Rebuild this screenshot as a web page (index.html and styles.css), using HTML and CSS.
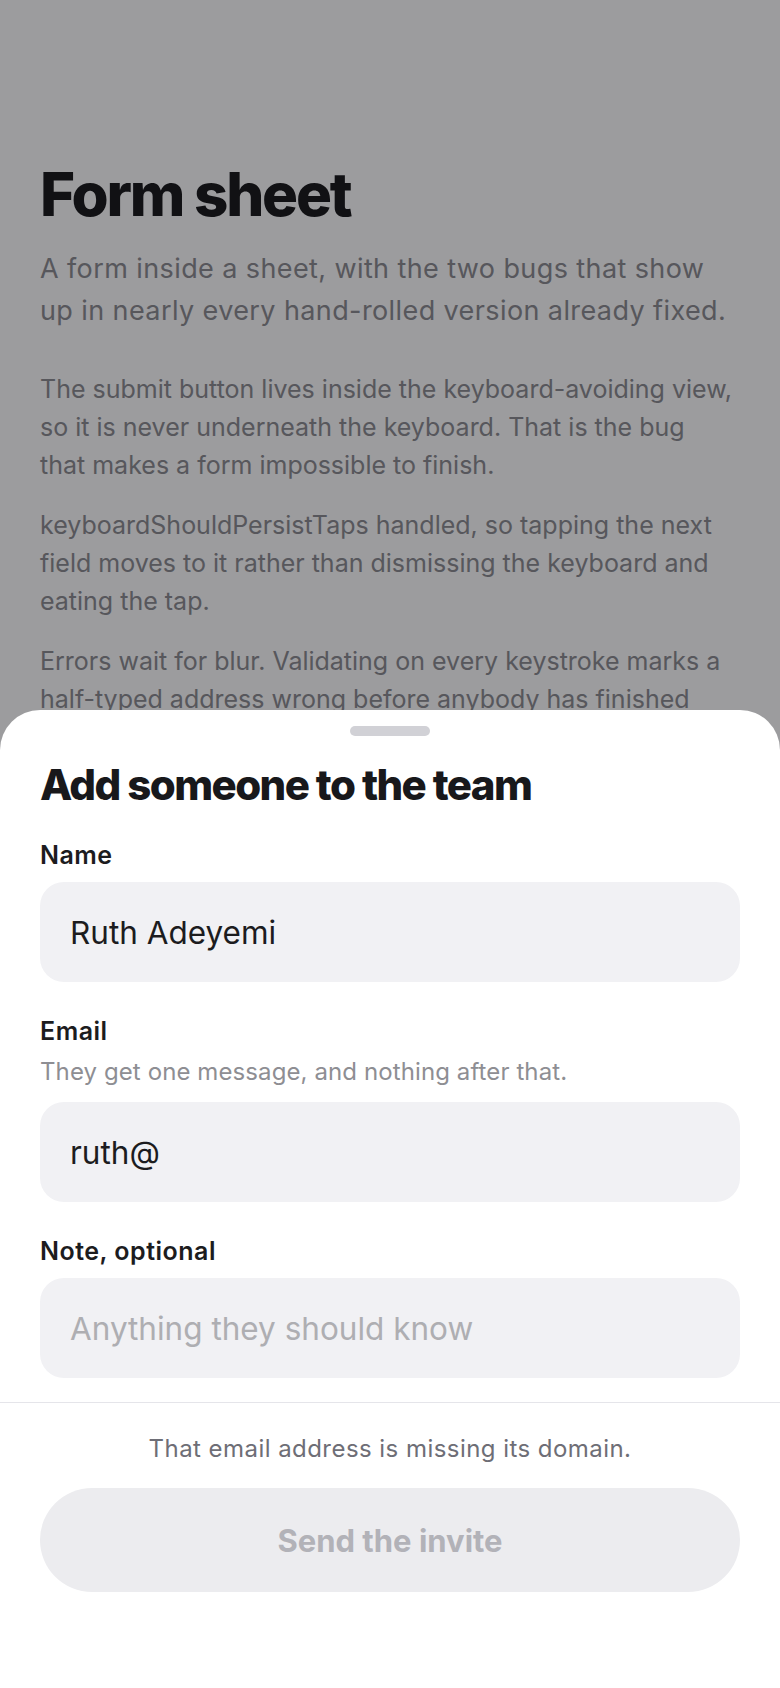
FILE: index.html
```html
<!DOCTYPE html>
<html lang="en">
<head>
<meta charset="utf-8">
<title>Form sheet</title>
<link rel="stylesheet" href="styles.css">
</head>
<body>
<div class="screen">
  <main class="page">
    <h1 class="page-title">Form sheet</h1>
    <p class="page-lede">A form inside a sheet, with the two bugs that show up in nearly every hand-rolled version already fixed.</p>
    <div class="notes">
      <p>The submit button lives inside the keyboard-avoiding view, so it is never underneath the keyboard. That is the bug that makes a form impossible to finish.</p>
      <p>keyboardShouldPersistTaps handled, so tapping the next field moves to it rather than dismissing the keyboard and eating the tap.</p>
      <p>Errors wait for blur. Validating on every keystroke marks a half-typed address wrong before anybody has finished typing it.</p>
    </div>
  </main>
  <div class="scrim"></div>
  <section class="sheet">
    <div class="handle"></div>
    <div class="sheet-body">
      <h2 class="sheet-title">Add someone to the team</h2>
      <div class="field">
        <label class="field-label">Name</label>
        <div class="input"><span class="input-value">Ruth Adeyemi</span></div>
      </div>
      <div class="field">
        <label class="field-label">Email</label>
        <div class="field-help">They get one message, and nothing after that.</div>
        <div class="input"><span class="input-value">ruth@</span></div>
      </div>
      <div class="field">
        <label class="field-label">Note, optional</label>
        <div class="input"><span class="input-placeholder">Anything they should know</span></div>
      </div>
    </div>
    <div class="sheet-footer">
      <p class="form-error">That email address is missing its domain.</p>
      <div class="submit">Send the invite</div>
    </div>
  </section>
</div>
</body>
</html>
```
FILE: styles.css
```css
* { box-sizing: border-box; }
html, body { margin: 0; padding: 0; }
body {
  font-family: Inter, "Noto Sans", "Liberation Sans", sans-serif;
  background: #ffffff;
  color: #1c1c1e;
}
.screen {
  position: relative;
  width: 780px;
  height: 1688px;
  overflow: hidden;
  background: #ffffff;
}
.page {
  padding: 161px 44px 0 40px;
}
.page-title {
  margin: 0;
  font-size: 60px;
  line-height: 66px;
  font-weight: 800;
  letter-spacing: -2.2px;
  color: #1c1c1e;
}
.page-lede {
  margin: 21px 0 0 0;
  font-size: 27px;
  line-height: 42px;
  letter-spacing: 0.4px;
  color: #8e8e93;
}
.notes {
  margin-top: 38px;
  display: flex;
  flex-direction: column;
  gap: 22px;
}
.notes p {
  margin: 0;
  font-size: 25px;
  line-height: 38px;
  color: #8e8e93;
}
.scrim {
  position: absolute;
  inset: 0;
  background: rgba(0, 0, 4, 0.39);
}
.sheet {
  position: absolute;
  left: 0;
  right: 0;
  bottom: 0;
  top: 710px;
  background: #ffffff;
  border-radius: 40px 40px 0 0;
  display: flex;
  flex-direction: column;
}
.handle {
  width: 80px;
  height: 10px;
  border-radius: 5px;
  background: #d1d1d6;
  margin: 16px auto 0 auto;
}
.sheet-body {
  padding: 24px 40px 24px 40px;
  display: flex;
  flex-direction: column;
}
.sheet-title {
  margin: 0;
  font-size: 42px;
  line-height: 50px;
  font-weight: 800;
  letter-spacing: -1.6px;
  color: #18181b;
}
.field {
  display: flex;
  flex-direction: column;
  margin-top: 34px;
}
.sheet-title + .field { margin-top: 30px; }
.field-label {
  font-size: 25px;
  line-height: 31px;
  font-weight: 600;
  letter-spacing: 0.5px;
  color: #1c1c1e;
}
.field-help {
  margin-top: 10px;
  font-size: 24px;
  line-height: 30px;
  letter-spacing: 0.1px;
  color: #8e8e93;
}
.input {
  margin-top: 11px;
  height: 100px;
  border-radius: 24px;
  background: #f1f1f4;
  display: flex;
  align-items: center;
  padding: 0 30px;
  font-size: 31.5px;
}
.field-help + .input { margin-top: 15px; }
.input-value { color: #1c1c1e; }
.input-placeholder { color: #aeaeb2; }
.sheet-footer {
  border-top: 1.5px solid #e5e5ea;
  padding: 30px 40px 0 40px;
  display: flex;
  flex-direction: column;
  align-items: stretch;
}
.form-error {
  margin: 0;
  text-align: center;
  font-size: 24px;
  line-height: 31px;
  letter-spacing: 0.45px;
  color: #6e6e76;
}
.submit {
  margin-top: 24px;
  height: 104px;
  border-radius: 52px;
  background: #ececef;
  color: #b2b2b8;
  font-size: 31px;
  font-weight: 700;
  display: flex;
  align-items: center;
  justify-content: center;
}
```
